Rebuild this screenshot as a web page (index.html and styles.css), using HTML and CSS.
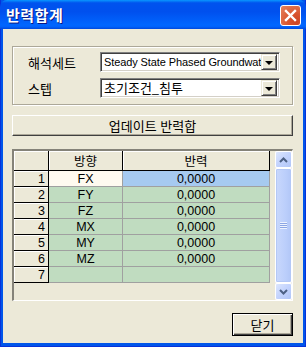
FILE: index.html
```html
<!DOCTYPE html>
<html lang="ko">
<head>
    <meta charset="UTF-8">
    <meta name="viewport" content="width=device-width, initial-scale=1.0">
    <title>반력합계</title>
    <link rel="stylesheet" href="styles.css">
</head>
<body>
    <div class="window">
        <div class="titlebar">
            <span class="title">반력합계</span>
            <span class="close-x">
                <svg width="13" height="13" viewBox="0 0 13 13">
                    <path d="M2 2 L11 11 M11 2 L2 11" stroke="#fff" stroke-width="2.4" stroke-linecap="square"/>
                </svg>
            </span>
        </div>

        <div class="client">
            <!-- Analysis set / step selection -->
            <div class="group">
                <div class="field">
                    <span class="label">해석세트</span>
                    <div class="combo">
                        <span class="combo-text latin">Steady State Phased Groundwater</span>
                        <span class="drop"></span>
                    </div>
                </div>
                <div class="field">
                    <span class="label">스텝</span>
                    <div class="combo">
                        <span class="combo-text">초기조건_침투</span>
                        <span class="drop"></span>
                    </div>
                </div>
            </div>

            <button class="btn wide">업데이트 반력합</button>

            <!-- Reaction sum grid -->
            <div class="grid-frame">
                <div class="sheet">
                    <div class="hd corner"></div>
                    <div class="hd">방향</div>
                    <div class="hd">반력</div>

                    <div class="rh">1</div>
                    <div class="cell dir current">FX</div>
                    <div class="cell val selected">0,0000</div>

                    <div class="rh">2</div>
                    <div class="cell dir">FY</div>
                    <div class="cell val">0,0000</div>

                    <div class="rh">3</div>
                    <div class="cell dir">FZ</div>
                    <div class="cell val">0,0000</div>

                    <div class="rh">4</div>
                    <div class="cell dir">MX</div>
                    <div class="cell val">0,0000</div>

                    <div class="rh">5</div>
                    <div class="cell dir">MY</div>
                    <div class="cell val">0,0000</div>

                    <div class="rh">6</div>
                    <div class="cell dir">MZ</div>
                    <div class="cell val">0,0000</div>

                    <div class="rh">7</div>
                    <div class="cell dir"></div>
                    <div class="cell val"></div>
                </div>

                <div class="scrollbar">
                    <div class="sb-btn">
                        <svg width="9" height="6" viewBox="0 0 9 6"><path d="M1 5 L4.5 1.5 L8 5" fill="none" stroke="#4d6185" stroke-width="2"/></svg>
                    </div>
                    <div class="sb-track">
                        <div class="sb-thumb">
                            <span class="grip"></span>
                        </div>
                    </div>
                    <div class="sb-btn">
                        <svg width="9" height="6" viewBox="0 0 9 6"><path d="M1 1 L4.5 4.5 L8 1" fill="none" stroke="#4d6185" stroke-width="2"/></svg>
                    </div>
                </div>
            </div>

            <div class="footer">
                <button class="btn default">닫기</button>
            </div>
        </div>
    </div>
</body>
</html>
```

FILE: styles.css
```css
body {
    margin: 0;
    font-family: "Noto Sans CJK KR", "Liberation Sans", sans-serif;
    font-size: 12px;
    color: #000;
}
.window {
    width: 306px;
    height: 347px;
    box-sizing: border-box;
    background-color: #0055ea;
    border: 1px solid #0831d9;
    border-top: none;
    display: flex;
    flex-direction: column;
}
.titlebar {
    height: 29px;
    flex: none;
    margin: 0 -1px;
    display: flex;
    align-items: center;
    justify-content: space-between;
    padding: 0 5px 0 6px;
    border-radius: 7px 7px 0 0;
    background: linear-gradient(to bottom, #0997ff 0%, #0053ee 10%, #0050ee 40%, #0066ff 86%, #0062fb 92%, #0048dc 100%);
}
.title {
    color: #fff;
    font-weight: bold;
    font-size: 15px;
    letter-spacing: 0.5px;
    text-shadow: 1px 1px 0 #0a1883;
    margin-top: -1px;
}
.close-x {
    width: 21px;
    height: 21px;
    box-sizing: border-box;
    border: 1px solid #fff;
    border-radius: 3px;
    background: radial-gradient(circle at 80% 85%, #cc4625 0%, #d8532d 35%, #e6835e 100%);
    display: flex;
    align-items: center;
    justify-content: center;
    margin-top: 1px;
}
.client {
    flex: 1;
    margin: 0 2px 3px 2px;
    background-color: #ece9d8;
    padding: 17px 10px 0 9px;
    display: flex;
    flex-direction: column;
}

/* Group box */
.group {
    height: 59px;
    box-sizing: border-box;
    border: 1px solid #aca899;
    box-shadow: inset 1px 1px 0 #fff, 1px 1px 0 #fff;
    padding: 5px 12px 0 14px;
    display: flex;
    flex-direction: column;
    gap: 6px;
}
.field {
    display: flex;
    align-items: center;
    height: 20px;
}
.label {
    width: 72px;
    padding-left: 1px;
    font-size: 13px;
}
.combo {
    flex: 1;
    height: 20px;
    box-sizing: border-box;
    background: #fff;
    border-top: 1px solid #808080;
    border-left: 1px solid #808080;
    border-right: 1px solid #fff;
    border-bottom: 1px solid #fff;
    box-shadow: inset 1px 1px 0 #404040, inset -1px -1px 0 #d4d0c8;
    display: flex;
    align-items: center;
    padding: 0 2px 0 3px;
    overflow: hidden;
}
.combo-text {
    flex: 1;
    white-space: nowrap;
    overflow: hidden;
    line-height: 18px;
    font-size: 13px;
}
.combo-text.latin {
    font-family: "Liberation Sans", sans-serif;
    font-size: 11px;
    letter-spacing: -0.1px;
    line-height: 16px;
}
.drop {
    flex: none;
    width: 16px;
    height: 16px;
    box-sizing: border-box;
    background: #ece9d8;
    border-top: 1px solid #ece9d8;
    border-left: 1px solid #ece9d8;
    border-right: 1px solid #404040;
    border-bottom: 1px solid #404040;
    box-shadow: inset 1px 1px 0 #fff, inset -1px -1px 0 #808080;
    position: relative;
}
.drop::after {
    content: "";
    position: absolute;
    left: 3px;
    top: 6px;
    border-left: 4px solid transparent;
    border-right: 4px solid transparent;
    border-top: 4px solid #000;
}

/* Buttons */
.btn {
    font-family: "Noto Sans CJK KR", sans-serif;
    font-size: 13px;
    background: #ece9d8;
    border-top: 1px solid #fff;
    border-left: 1px solid #fff;
    border-right: 1px solid #404040;
    border-bottom: 1px solid #404040;
    box-shadow: inset -1px -1px 0 #aca899;
    padding: 0;
    color: #000;
    line-height: 16px;
}
.btn.wide {
    margin-top: 10px;
    height: 21px;
    width: 100%;
}
.btn.default {
    width: 61px;
    height: 23px;
    border: 1px solid #000;
    box-shadow: inset 1px 1px 0 #fff, inset -1px -1px 0 #404040, inset -2px -2px 0 #aca899;
}
.footer {
    display: flex;
    justify-content: flex-end;
    margin-top: 12px;
}

/* Grid */
.grid-frame {
    margin-top: 13px;
    height: 152px;
    box-sizing: border-box;
    border-top: 2px solid #858379;
    border-left: 2px solid #858379;
    border-right: 1px solid #fff;
    border-bottom: 1px solid #fff;
    display: flex;
    justify-content: space-between;
    background: #ece9d8;
}
.sheet {
    display: grid;
    grid-template-columns: 35px 74px 147px;
    grid-template-rows: 20px;
    grid-auto-rows: 16px;
    align-content: start;
}
.sheet > div {
    box-sizing: border-box;
    display: flex;
    align-items: center;
    justify-content: center;
    line-height: 14px;
    font-family: "Liberation Sans", sans-serif;
    font-size: 12.5px;
    overflow: hidden;
}
.sheet > .hd {
    font-family: "Noto Sans CJK KR", sans-serif;
    font-size: 12.5px;
    line-height: 18px;
}
.hd {
    background: #ece9d8;
    border-right: 1px solid #000;
    border-bottom: 1px solid #000;
    box-shadow: inset 1px 1px 0 #fff;
}
.rh {
    background: #ece9d8;
    border-right: 1px solid #000;
    border-bottom: 1px solid #000;
    box-shadow: inset 1px 1px 0 #fff;
    justify-content: flex-end !important;
    padding-right: 3px;
}
.cell {
    background: #c0dcc0;
    border-right: 1px solid #a0a0a0;
    border-bottom: 1px solid #a0a0a0;
}
.cell.current {
    background: #fffaf0;
}
.cell.selected {
    background: #a6caf0;
}

/* Scrollbar */
.scrollbar {
    width: 17px;
    display: flex;
    flex-direction: column;
    background: #f3f1ec;
}
.sb-btn {
    height: 17px;
    box-sizing: border-box;
    border: 1px solid #fff;
    border-radius: 2px;
    background: linear-gradient(135deg, #dce6fd 0%, #c3d3fd 50%, #b1c6f7 100%);
    display: flex;
    align-items: center;
    justify-content: center;
}
.sb-track {
    flex: 1;
    display: flex;
}
.sb-thumb {
    flex: 1;
    box-sizing: border-box;
    border: 1px solid #fff;
    border-radius: 2px;
    background: linear-gradient(to right, #c9d8fc 0%, #bccffb 60%, #b2c7f7 100%);
    box-shadow: inset 0 0 0 1px #b4c8f6;
    display: flex;
    align-items: center;
    justify-content: center;
}
.grip {
    width: 7px;
    height: 7px;
    background: repeating-linear-gradient(to bottom, #eef3fe 0, #eef3fe 1px, #8ca6e4 1px, #8ca6e4 2px);
}
```
